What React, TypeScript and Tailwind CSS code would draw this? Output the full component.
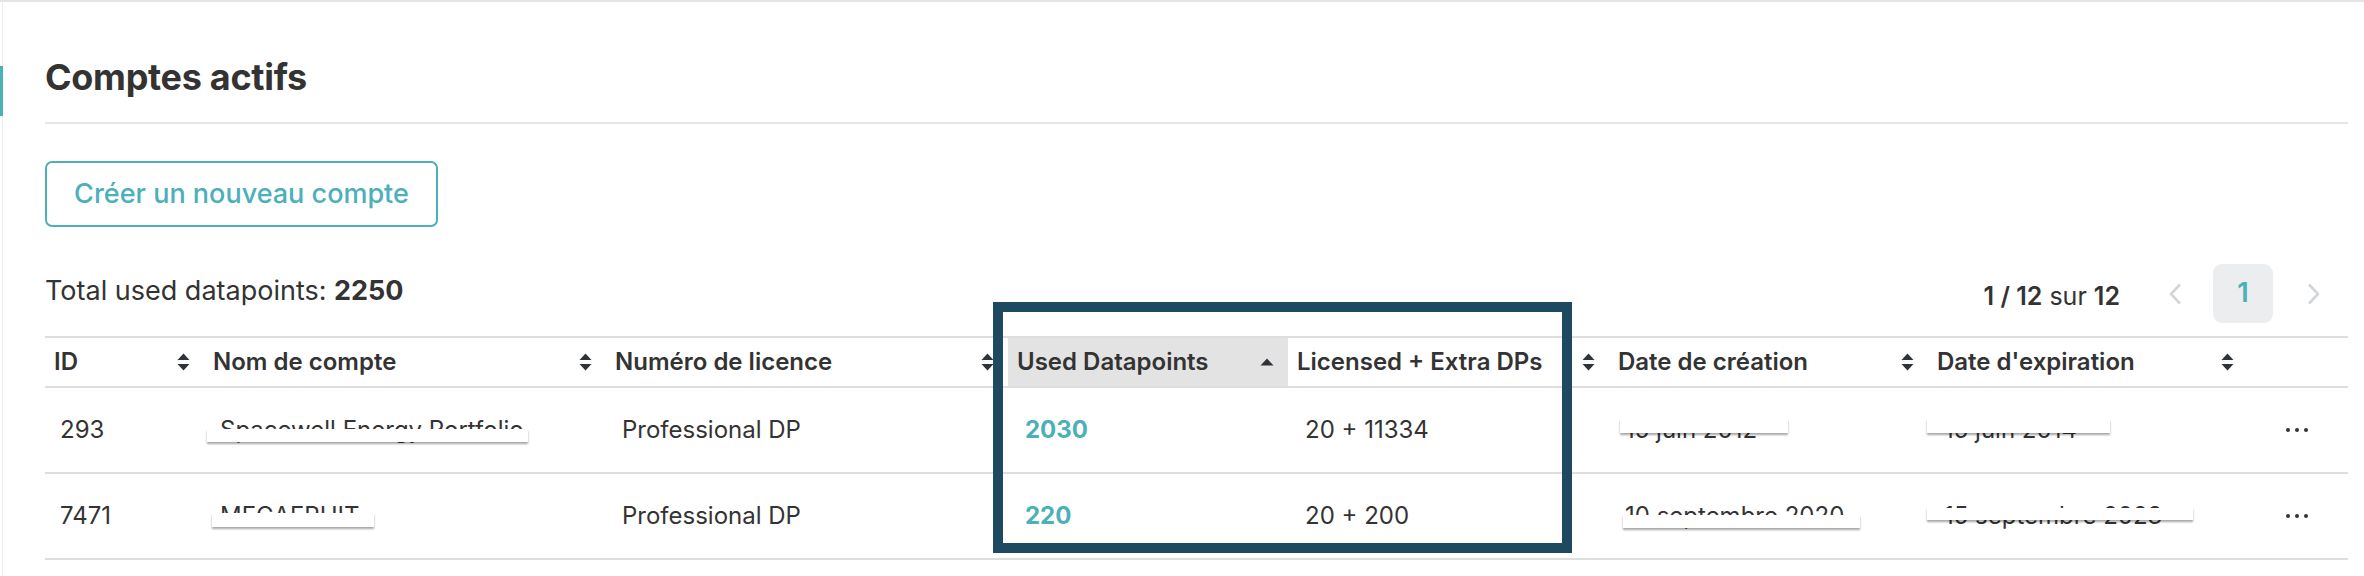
import React from "react";

type Col = { label: string; width: string; sort: "both" | "asc" | "none"; active?: boolean };

const columns: Col[] = [
    { label: "ID", width: "159px", sort: "both" },
    { label: "Nom de compte", width: "402px", sort: "both" },
    { label: "Numéro de licence", width: "402px", sort: "both" },
    { label: "Used Datapoints", width: "280px", sort: "asc", active: true },
    { label: "Licensed + Extra DPs", width: "321px", sort: "both" },
    { label: "Date de création", width: "319px", sort: "both" },
    { label: "Date d'expiration", width: "320px", sort: "both" },
    { label: "", width: "100px", sort: "none" },
];

// redaction box placed over a piece of text (the screenshot hides names and dates)
type Mask = { left: number; top: number; width: number; height: number };

interface Row {
    id: string;
    name: string;
    nameMask: Mask;
    licence: string;
    used: string;
    licensed: string;
    created: string;
    createdMask: Mask;
    expires: string;
    expiresMask: Mask;
}

const rows: Row[] = [
    {
        id: "293",
        name: "Spacewell Energy Portfolio",
        nameMask: { left: -13, top: 11, width: 321, height: 13 },
        licence: "Professional DP",
        used: "2030",
        licensed: "20 + 11334",
        created: "15 juin 2012",
        createdMask: { left: -5, top: 1, width: 168, height: 14 },
        expires: "15 juin 2014",
        expiresMask: { left: -17, top: 1, width: 183, height: 14 },
    },
    {
        id: "7471",
        name: "MEGAFRUIT",
        nameMask: { left: -8, top: 9, width: 162, height: 14 },
        licence: "Professional DP",
        used: "220",
        licensed: "20 + 200",
        created: "10 septembre 2020",
        createdMask: { left: -2, top: 11, width: 237, height: 13 },
        expires: "15 septembre 2023",
        expiresMask: { left: -17, top: 4, width: 266, height: 12 },
    },
];

const gridCols = "grid grid-cols-[159px_402px_402px_280px_321px_319px_320px_100px]";

function SortIcon({ kind }: { kind: "both" | "asc" }) {
    if (kind === "asc") {
        return (
            <svg width="14" height="8" viewBox="0 0 14 8" className="flex-none">
                <polygon points="7,0.5 13.5,7.5 0.5,7.5" fill="#2f3337" />
            </svg>
        );
    }
    return (
        <svg width="13" height="18" viewBox="0 0 13 18" className="flex-none">
            <polygon points="6.5,0.5 12.5,7 0.5,7" fill="#2f3337" />
            <polygon points="0.5,11 12.5,11 6.5,17.5" fill="#2f3337" />
        </svg>
    );
}

function Masked({ text, mask }: { text: string; mask: Mask }) {
    return (
        <span className="relative inline-block leading-[24px] whitespace-nowrap">
            {text}
            <span
                className="absolute bg-white shadow-[0_2px_2px_rgba(0,0,0,0.35)]"
                style={{ left: mask.left, top: mask.top, width: mask.width, height: mask.height }}
            />
        </span>
    );
}

function Chevron({ dir }: { dir: "left" | "right" }) {
    return (
        <svg width="17" height="22" viewBox="0 0 17 22" fill="none" className="flex-none">
            <polyline
                points={dir === "left" ? "13,1.5 4,11 13,20.5" : "4,1.5 13,11 4,20.5"}
                stroke="#d3d6d9"
                strokeWidth="2.6"
                strokeLinejoin="round"
            />
        </svg>
    );
}

export default function App() {
    return (
        <div className="relative flex w-[2364px] h-[576px] overflow-hidden bg-white border-t-2 border-[#e4e4e4] font-['Inter',sans-serif] text-[#333333]">
            {/* left rail with active indicator */}
            <div className="flex flex-col w-[3px] flex-none">
                <div className="h-[64px] border-r border-[#ececec]" />
                <div className="h-[50px] bg-[#4bb0b9]" />
                <div className="flex-1 border-r border-[#ececec]" />
            </div>

            <div className="flex-1 pl-[42px] pr-[16px]">
                <h1 className="pt-[57px] text-[36px] leading-[36px] font-bold tracking-[-0.3px]">Comptes actifs</h1>
                <div className="mt-[27px] h-[2px] bg-[#e6e6e6]" />

                <button className="mt-[37px] flex items-center justify-center w-[393px] h-[66px] border-2 border-[#4bb0b9] rounded-[7px] text-[27px] font-medium text-[#4bb0b9]">
                    Créer un nouveau compte
                </button>

                <div className="mt-[37px] h-[59px] flex items-center justify-between">
                    <p className="pb-[6px] text-[27px] leading-[32px]">
                        Total used datapoints: <span className="font-bold">2250</span>
                    </p>
                    <div className="flex items-center pr-[26px]">
                        <span className="text-[25px] leading-[30px] pt-[4px]">
                            <span className="font-semibold">1 / 12</span> sur <span className="font-semibold">12</span>
                        </span>
                        <div className="ml-[47px]">
                            <Chevron dir="left" />
                        </div>
                        <div className="ml-[29px] flex items-center justify-center w-[60px] h-[59px] rounded-[9px] bg-[#ebedef] text-[27px] font-semibold text-[#4bb0b9]">
                            1
                        </div>
                        <div className="ml-[32px]">
                            <Chevron dir="right" />
                        </div>
                    </div>
                </div>

                {/* table */}
                <div className="mt-[13px] border-t-2 border-[#dcdee0] text-[24px]">
                    <div className={`${gridCols} h-[50px] border-b-2 border-[#dcdee0]`}>
                        {columns.map((c, i) => (
                            <div
                                key={i}
                                className={`flex items-center justify-between pl-[9px] pr-[14px] font-semibold ${c.active ? "bg-[#e3e3e3]" : ""}`}
                            >
                                <span className="whitespace-nowrap">{c.label}</span>
                                {c.sort !== "none" && <SortIcon kind={c.sort} />}
                            </div>
                        ))}
                    </div>

                    {rows.map((r) => (
                        <div key={r.id} className={`${gridCols} h-[86px] border-b-2 border-[#dcdee0]`}>
                            <div className="flex items-center pl-[15px]">{r.id}</div>
                            <div className="flex items-center pl-[16px]">
                                <Masked text={r.name} mask={r.nameMask} />
                            </div>
                            <div className="flex items-center pl-[16px]">{r.licence}</div>
                            <div className="flex items-center pl-[17px] font-bold text-[#4bb0b9]">{r.used}</div>
                            <div className="flex items-center pl-[17px]">{r.licensed}</div>
                            <div className="flex items-center pl-[16px]">
                                <Masked text={r.created} mask={r.createdMask} />
                            </div>
                            <div className="flex items-center pl-[16px]">
                                <Masked text={r.expires} mask={r.expiresMask} />
                            </div>
                            <div className="flex items-center pl-[38px] gap-[5px]">
                                <span className="w-[4px] h-[4px] rounded-full bg-[#333333]" />
                                <span className="w-[4px] h-[4px] rounded-full bg-[#333333]" />
                                <span className="w-[4px] h-[4px] rounded-full bg-[#333333]" />
                            </div>
                        </div>
                    ))}
                </div>
            </div>

            {/* annotation frame drawn over the table */}
            <div className="absolute left-[993px] top-[300px] w-[579px] h-[251px] border-[10px] border-[#1e4a61] pointer-events-none" />
        </div>
    );
}
